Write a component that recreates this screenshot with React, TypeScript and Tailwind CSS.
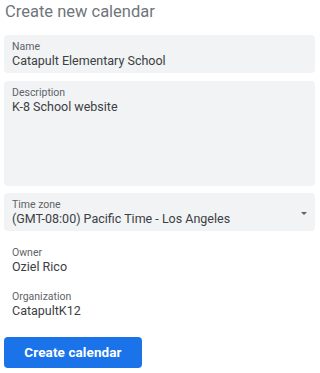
import * as React from 'react';

type FieldProps = {
  label: string;
  value: string;
  className?: string;
  children?: React.ReactNode;
};

const FilledField: React.FC<FieldProps> = ({ label, value, className, children }) => {
  return (
    <div
      className={`relative rounded-[4px] bg-[#f1f3f4] px-2 pt-[5px] pb-[4px] ${className ?? ''}`}
    >
      <div className="text-[10.5px] leading-[13px] text-[#5f6368]">{label}</div>
      <div className="text-[12.5px] leading-[16px] text-[#3c4043]">{value}</div>
      {children}
    </div>
  );
};

const InfoRow: React.FC<FieldProps> = ({ label, value, className }) => (
  <div className={`px-2 ${className ?? ''}`}>
    <div className="text-[10.5px] leading-[13px] text-[#5f6368]">{label}</div>
    <div className="text-[12.5px] leading-[16px] text-[#3c4043]">{value}</div>
  </div>
);

export default function App() {
  return (
    <div className="w-[319px] h-[373px] bg-white px-1 font-['Roboto',sans-serif]">
      <div className="pl-px text-[16.5px] leading-[24px] text-[#70757a]">Create new calendar</div>

      <div className="mt-[11px] w-[311px]">
        <FilledField label="Name" value="Catapult Elementary School" className="h-[38px]" />
        <FilledField
          label="Description"
          value="K-8 School website"
          className="mt-2 h-[105px]"
        />
        <FilledField
          label="Time zone"
          value="(GMT-08:00) Pacific Time - Los Angeles"
          className="mt-[7px] h-[38px]"
        >
          <div className="absolute right-2 top-[19px] w-0 h-0 border-x-[3.5px] border-x-transparent border-t-[3.5px] border-t-[#5f6368]" />
        </FilledField>
      </div>

      <InfoRow label="Owner" value="Oziel Rico" className="mt-[15px]" />
      <InfoRow label="Organization" value="CatapultK12" className="mt-[15px]" />

      <button className="mt-[18px] flex h-[31px] w-[138px] items-center justify-center rounded-[4px] bg-[#1a73e8] text-[13.5px] font-bold tracking-[0.1px] text-white">
        Create calendar
      </button>
    </div>
  );
}
